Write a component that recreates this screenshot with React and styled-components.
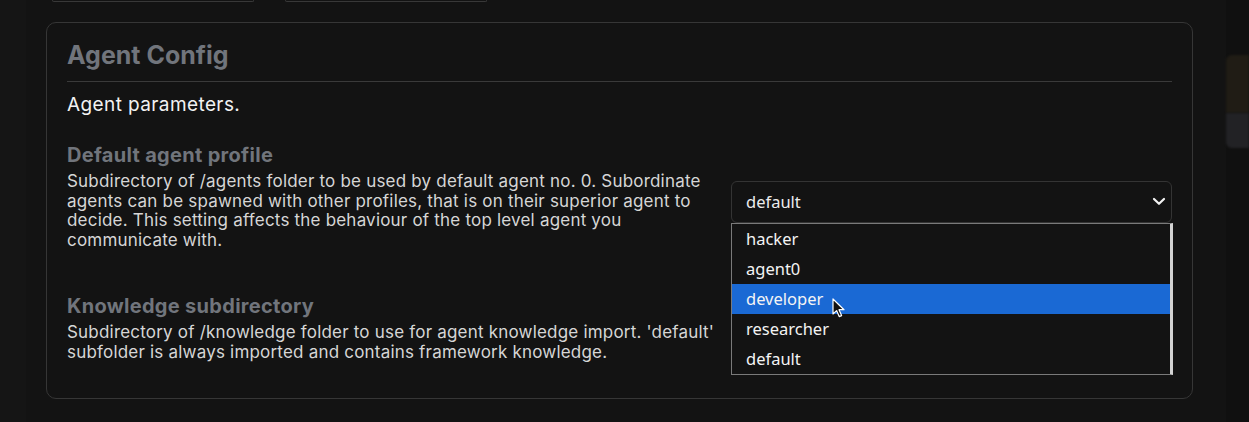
import React from "react";
import styled, { createGlobalStyle } from "styled-components";

const Global = createGlobalStyle`
  html, body { margin: 0; padding: 0; background: #131313; }
  body { font-family: Inter, "Liberation Sans", sans-serif; color: #e6e6e6; overflow: hidden; }
  * { box-sizing: border-box; }
`;

const Page = styled.div`
  display: flex;
  width: 1249px;
  height: 422px;
  background: #131313;
`;

const LeftStrip = styled.div`
  width: 26px;
  flex-shrink: 0;
  background: #151515;
`;

const Main = styled.div`
  flex: 1;
  padding: 0 33px 0 20px;
  display: flex;
  flex-direction: column;
`;

const TabRow = styled.div`
  display: flex;
  gap: 31px;
  height: 2px;
  padding-left: 6px;
`;

const Tab = styled.div`
  width: 202px;
  height: 2px;
  border: 1px solid #383838;
  border-top: none;
  border-radius: 0 0 5px 5px;
`;

const Card = styled.section`
  margin-top: 20px;
  border: 1px solid #363636;
  border-radius: 10px;
  padding: 17px 20px 36px 20px;
  background: #131313;
`;

const Title = styled.h2`
  margin: 0;
  font-size: 25px;
  line-height: 30px;
  font-weight: 700;
  color: #71757c;
  padding-bottom: 11px;
  border-bottom: 1px solid #3a3a3a;
`;

const Subtitle = styled.p`
  margin: 11px 0 0 0;
  font-size: 19px;
  line-height: 23px;
  letter-spacing: 0.4px;
  color: #f2f2f2;
`;

const Row = styled.div`
  display: flex;
  align-items: center;
  gap: 8px;
  margin-top: ${(p) => p.$top}px;
`;

const Info = styled.div`
  flex: 1;
  min-width: 0;
`;

const Label = styled.div`
  font-size: 20px;
  line-height: 24px;
  font-weight: 700;
  letter-spacing: 0.3px;
  color: #71757c;
  margin-bottom: 5px;
`;

const Desc = styled.div`
  font-size: 17px;
  line-height: 19.7px;
  letter-spacing: 0.2px;
  color: #d6d6d6;
`;

const Control = styled.div`
  position: relative;
  width: 441px;
  flex-shrink: 0;
  margin-top: 10px;
`;

const Select = styled.div`
  height: 42px;
  border: 1px solid #343434;
  border-radius: 6px;
  background: #131313;
  display: flex;
  align-items: center;
  justify-content: space-between;
  padding: 0 5px 0 14px;
  font-family: "Noto Sans", "Open Sans", sans-serif;
  font-size: 16.5px;
  color: #ececec;
`;

const List = styled.ul`
  position: absolute;
  top: 42px;
  left: 0;
  width: 442px;
  margin: 0;
  padding: 0;
  list-style: none;
  border: 1px solid #7a7a7a;
  border-right: 3px solid #d2d2d2;
  background: #131313;
  z-index: 5;
  font-family: "Noto Sans", "Open Sans", sans-serif;
  font-size: 16.5px;
`;

const Item = styled.li`
  height: 30px;
  line-height: 29px;
  padding-left: 14px;
  color: #f4f4f4;
  background: ${(p) => (p.$active ? "#1a69d4" : "transparent")};
`;

const Cursor = styled.svg`
  position: absolute;
  left: 101px;
  top: 117px;
  z-index: 6;
`;

const RightStrip = styled.div`
  width: 23px;
  flex-shrink: 0;
  background: #101010;
  display: flex;
  flex-direction: column;
  padding-top: 55px;
`;

const Blur = styled.div`
  height: ${(p) => p.$h}px;
  background: ${(p) => p.$bg};
  border-radius: ${(p) => p.$r};
  filter: blur(1px);
`;

const Chevron = () => (
  <svg width="14" height="9" viewBox="0 0 14 9">
    <path d="M2 2 L7 6.8 L12 2" fill="none" stroke="#f2f2f2" strokeWidth="2.2" strokeLinecap="round" strokeLinejoin="round" />
  </svg>
);

const options = ["hacker", "agent0", "developer", "researcher", "default"];

export default function App() {
  return (
    <>
      <Global />
      <Page>
        <LeftStrip />
        <Main>
          <TabRow>
            <Tab />
            <Tab />
          </TabRow>
          <Card>
            <Title>Agent Config</Title>
            <Subtitle>Agent parameters.</Subtitle>
            <Row $top={27}>
              <Info>
                <Label>Default agent profile</Label>
                <Desc>
                  Subdirectory of /agents folder to be used by default agent no. 0. Subordinate agents can be
                  spawned with other profiles, that is on their superior agent to decide. This setting affects
                  the behaviour of the top level agent you communicate with.
                </Desc>
              </Info>
              <Control>
                <Select>
                  <span>default</span>
                  <Chevron />
                </Select>
                <List>
                  {options.map((o) => (
                    <Item key={o} $active={o === "developer"}>
                      {o}
                    </Item>
                  ))}
                </List>
                <Cursor width="13" height="20" viewBox="0 0 13 20">
                  <path d="M1 1 L1 16 L4.6 12.6 L7.2 18.6 L9.6 17.6 L7 11.7 L12 11.7 Z" fill="#111" stroke="#fff" strokeWidth="1.2" strokeLinejoin="round" />
                </Cursor>
              </Control>
            </Row>
            <Row $top={43}>
              <Info>
                <Label>Knowledge subdirectory</Label>
                <Desc>
                  Subdirectory of /knowledge folder to use for agent knowledge import. 'default' subfolder is
                  always imported and contains framework knowledge.
                </Desc>
              </Info>
              <Control>
                <Select>
                  <span />
                  <Chevron />
                </Select>
              </Control>
            </Row>
          </Card>
        </Main>
        <RightStrip>
          <Blur $h={58} $bg="#201c15" $r="6px 0 0 0" />
          <Blur $h={35} $bg="#222225" $r="0 0 0 6px" />
        </RightStrip>
      </Page>
    </>
  );
}
